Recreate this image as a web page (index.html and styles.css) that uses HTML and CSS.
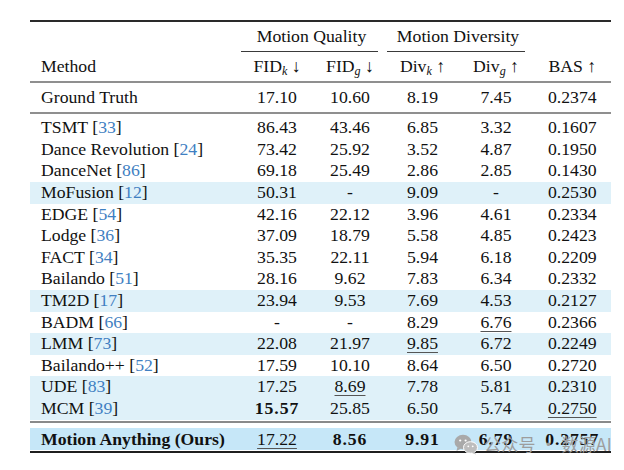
FILE: index.html
```html
<!DOCTYPE html>
<html>
<head>
<meta charset="utf-8">
<link rel="stylesheet" href="styles.css">
</head>
<body>
<div class="page">
  <div class="table">
    <div class="rule top"></div>
    <div class="row group">
      <div class="c"></div>
      <div class="c span2"><div class="gtext">Motion Quality</div><div class="cline"></div></div>
      <div class="c span2"><div class="gtext">Motion Diversity</div><div class="cline"></div></div>
      <div class="c"></div>
    </div>
    <div class="row head">
      <div class="c m">Method</div>
      <div class="c">FID<sub>k</sub> ↓</div>
      <div class="c">FID<sub>g</sub> ↓</div>
      <div class="c">Div<sub>k</sub> ↑</div>
      <div class="c">Div<sub>g</sub> ↑</div>
      <div class="c">BAS ↑</div>
    </div>
    <div class="rule mid"></div>
    <div class="row gt">
      <div class="c m">Ground Truth</div>
      <div class="c">17.10</div><div class="c">10.60</div><div class="c">8.19</div><div class="c">7.45</div><div class="c">0.2374</div>
    </div>
    <div class="rule mid"></div>
    <div class="body">
      <div class="row d"><div class="c m">TSMT [<span class="ref">33</span>]</div><div class="c">86.43</div><div class="c">43.46</div><div class="c">6.85</div><div class="c">3.32</div><div class="c">0.1607</div></div>
      <div class="row d"><div class="c m">Dance Revolution [<span class="ref">24</span>]</div><div class="c">73.42</div><div class="c">25.92</div><div class="c">3.52</div><div class="c">4.87</div><div class="c">0.1950</div></div>
      <div class="row d"><div class="c m">DanceNet [<span class="ref">86</span>]</div><div class="c">69.18</div><div class="c">25.49</div><div class="c">2.86</div><div class="c">2.85</div><div class="c">0.1430</div></div>
      <div class="row d hl"><div class="c m">MoFusion [<span class="ref">12</span>]</div><div class="c">50.31</div><div class="c">-</div><div class="c">9.09</div><div class="c">-</div><div class="c">0.2530</div></div>
      <div class="row d"><div class="c m">EDGE [<span class="ref">54</span>]</div><div class="c">42.16</div><div class="c">22.12</div><div class="c">3.96</div><div class="c">4.61</div><div class="c">0.2334</div></div>
      <div class="row d"><div class="c m">Lodge [<span class="ref">36</span>]</div><div class="c">37.09</div><div class="c">18.79</div><div class="c">5.58</div><div class="c">4.85</div><div class="c">0.2423</div></div>
      <div class="row d"><div class="c m">FACT [<span class="ref">34</span>]</div><div class="c">35.35</div><div class="c">22.11</div><div class="c">5.94</div><div class="c">6.18</div><div class="c">0.2209</div></div>
      <div class="row d"><div class="c m">Bailando [<span class="ref">51</span>]</div><div class="c">28.16</div><div class="c">9.62</div><div class="c">7.83</div><div class="c">6.34</div><div class="c">0.2332</div></div>
      <div class="row d hl"><div class="c m">TM2D [<span class="ref">17</span>]</div><div class="c">23.94</div><div class="c">9.53</div><div class="c">7.69</div><div class="c">4.53</div><div class="c">0.2127</div></div>
      <div class="row d"><div class="c m">BADM [<span class="ref">66</span>]</div><div class="c">-</div><div class="c">-</div><div class="c">8.29</div><div class="c"><span class="u">6.76</span></div><div class="c">0.2366</div></div>
      <div class="row d hl"><div class="c m">LMM [<span class="ref">73</span>]</div><div class="c">22.08</div><div class="c">21.97</div><div class="c"><span class="u">9.85</span></div><div class="c">6.72</div><div class="c">0.2249</div></div>
      <div class="row d"><div class="c m">Bailando++ [<span class="ref">52</span>]</div><div class="c">17.59</div><div class="c">10.10</div><div class="c">8.64</div><div class="c">6.50</div><div class="c">0.2720</div></div>
      <div class="row d hl"><div class="c m">UDE [<span class="ref">83</span>]</div><div class="c">17.25</div><div class="c"><span class="u">8.69</span></div><div class="c">7.78</div><div class="c">5.81</div><div class="c">0.2310</div></div>
      <div class="row d hl"><div class="c m">MCM [<span class="ref">39</span>]</div><div class="c"><span class="b">15.57</span></div><div class="c">25.85</div><div class="c">6.50</div><div class="c">5.74</div><div class="c"><span class="u">0.2750</span></div></div>
    </div>
    <div class="rule mid2"></div>
    <div class="row ours">
      <div class="c m strong">Motion Anything (Ours)</div>
      <div class="c"><span class="u">17.22</span></div>
      <div class="c"><span class="b">8.56</span></div>
      <div class="c"><span class="b">9.91</span></div>
      <div class="c"><span class="b">6.79</span></div>
      <div class="c"><span class="b">0.2757</span></div>
    </div>
    <div class="rule bottom"></div>
  </div>
  <div class="watermark">
    <svg class="wx" width="24" height="21" viewBox="0 0 24 21">
      <ellipse cx="9" cy="8" rx="8.5" ry="7.2" fill="#a9a9a9"/>
      <path d="M3.5 13 L2.5 17 L7 14.5 Z" fill="#a9a9a9"/>
      <circle cx="6.2" cy="6.5" r="1.1" fill="#fff"/>
      <circle cx="11.6" cy="6.5" r="1.1" fill="#fff"/>
      <ellipse cx="16.5" cy="13.5" rx="7" ry="5.8" fill="#bdbdbd" stroke="#fff" stroke-width="1"/>
      <path d="M20.5 17.5 L22 20.5 L17.5 18.8 Z" fill="#bdbdbd"/>
      <circle cx="14.3" cy="12.3" r="0.9" fill="#fff"/>
      <circle cx="18.7" cy="12.3" r="0.9" fill="#fff"/>
    </svg>
    <span class="wtext">公众号 · 数源AI</span>
  </div>
</div>
</body>
</html>
```

FILE: styles.css
```css
html, body {
  margin: 0;
  padding: 0;
  background: #ffffff;
}

.page {
  position: relative;
  width: 624px;
  height: 470px;
  overflow: hidden;
}

.table {
  margin-left: 30px;
  padding-top: 20px;
  width: 581px;
  font-family: "Liberation Serif", "Tinos", "Times New Roman", "DejaVu Serif", serif;
  font-size: 17.7px;
  color: #111111;
}

.rule { width: 100%; }
.rule.top { height: 2px; background: #2a2a2a; }
.rule.mid { height: 2px; background: #8f8f8f; }
.rule.mid2 { height: 2px; background: #8a8a8a; margin-top: 1px; margin-bottom: 5px; }
.rule.bottom { height: 2px; background: #1f1f1f; margin-top: 1.5px; }

.row {
  display: grid;
  grid-template-columns: 210.5px 73px 73px 72px 75px 77.5px;
  align-items: center;
}

.c {
  text-align: center;
  white-space: nowrap;
}

.c.m {
  text-align: left;
  padding-left: 11px;
}

.row.group {
  height: 30px;
  align-items: end;
}

.span2 {
  grid-column: span 2;
  display: flex;
  flex-direction: column;
}

.gtext {
  line-height: 22px;
  padding-bottom: 4px;
  padding-right: 4px;
}

.cline {
  height: 1px;
  background: #3a3a3a;
  margin-right: 9px;
}

.row.head {
  height: 29px;
  line-height: 28px;
  align-items: start;
}

.row.gt {
  height: 29px;
  line-height: 28px;
  align-items: start;
}

sub {
  font-style: italic;
  font-size: 0.68em;
  line-height: 0;
  vertical-align: -0.28em;
}

.body {
  padding-top: 3.2px;
}

.row.d {
  height: 21.6px;
  line-height: 21.6px;
}

.row.hl {
  background: #dff1f9;
}

.row.ours {
  height: 22.4px;
  line-height: 22.4px;
  background: #c6e7f8;
}

.ref {
  color: #3f7fc2;
}

.u {
  text-decoration: underline;
  text-decoration-color: #555555;
  text-decoration-thickness: 1px;
  text-underline-offset: 3px;
}

.b {
  font-weight: bold;
  letter-spacing: 0.9px;
}

.strong {
  font-weight: bold;
}

.watermark {
  position: absolute;
  left: 454px;
  top: 433px;
  display: flex;
  align-items: center;
  gap: 6px;
}

.wtext {
  font-family: "Noto Sans CJK SC", "Noto Sans", sans-serif;
  font-size: 17px;
  color: #9d9d9d;
  letter-spacing: 0.3px;
  line-height: 22px;
}
```
